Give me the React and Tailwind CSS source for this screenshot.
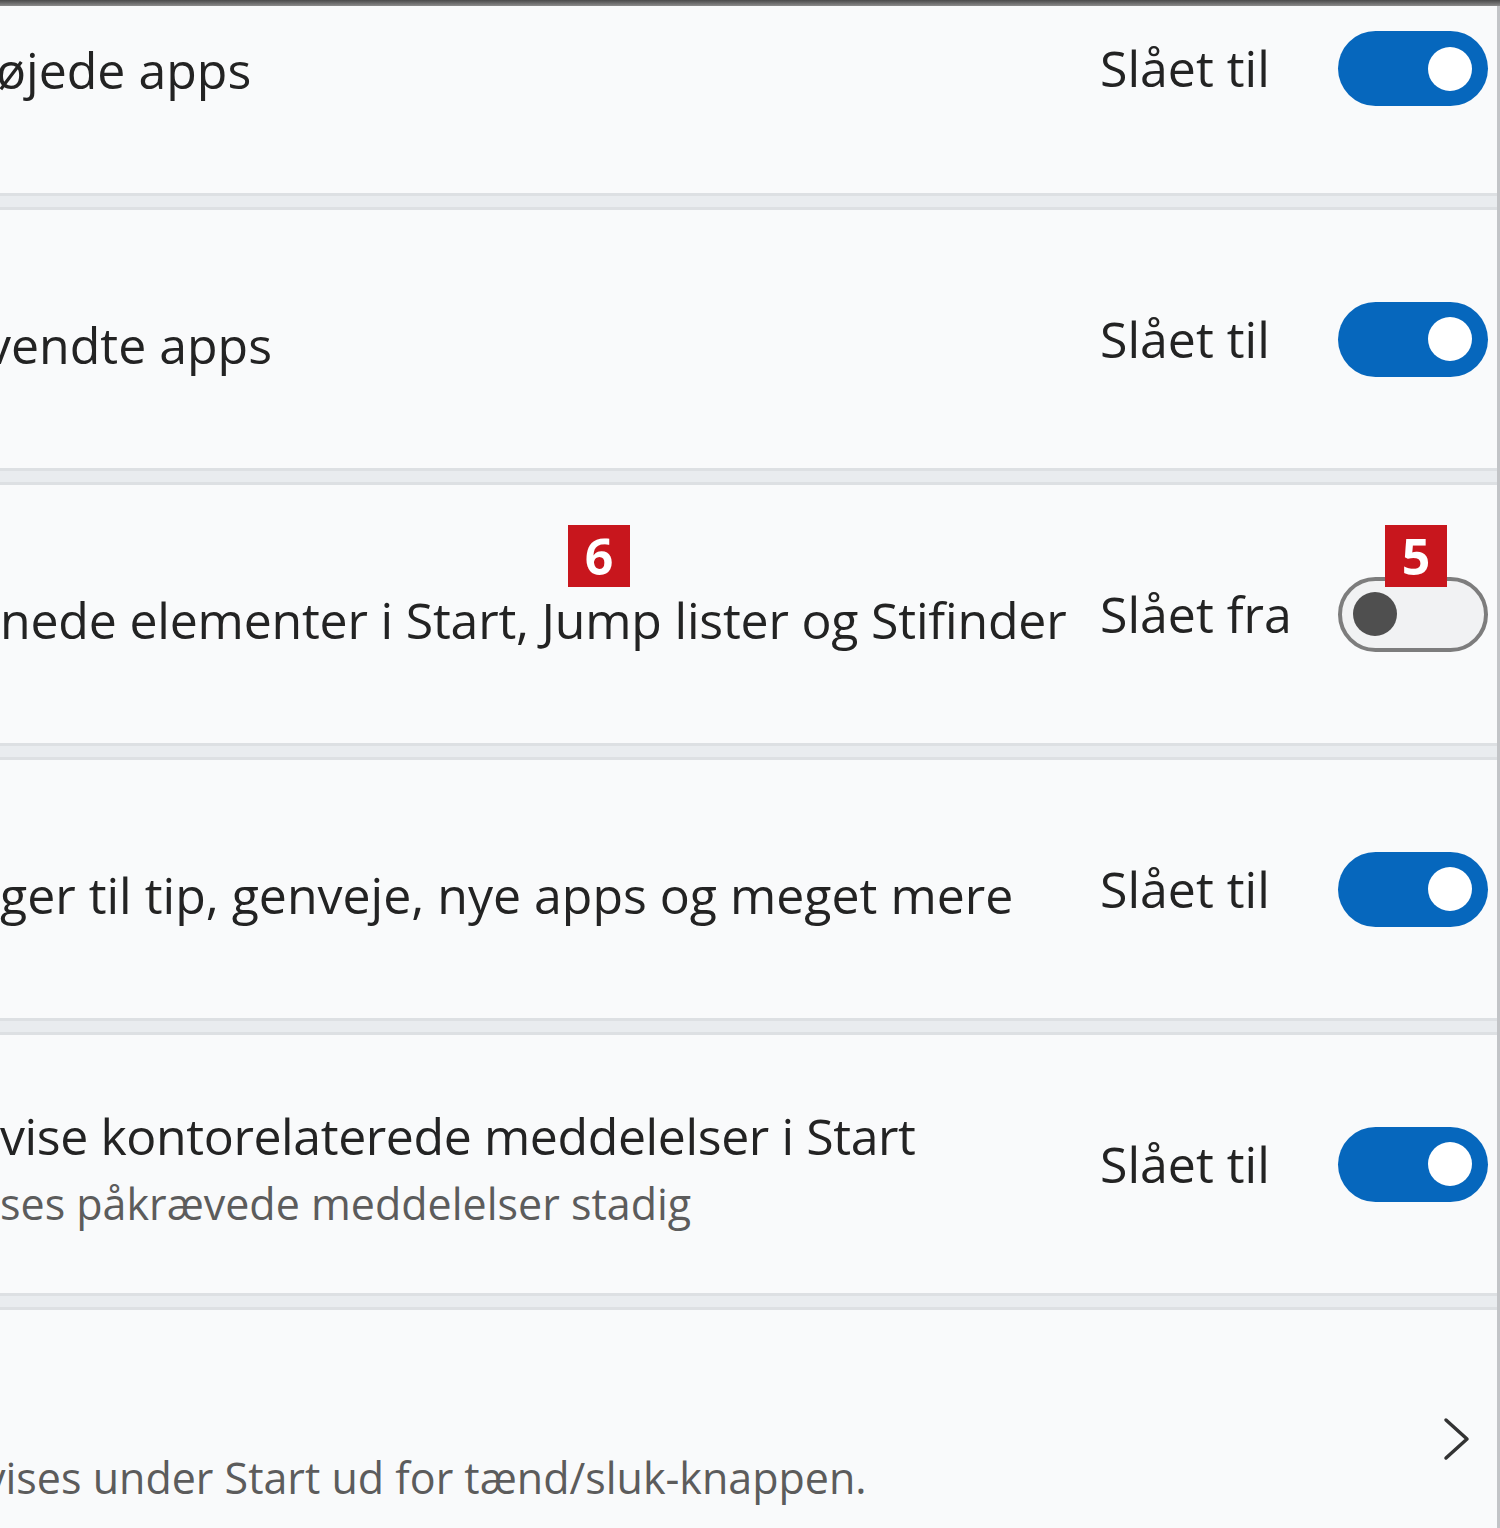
import React from 'react';

const rows = [
  { title: 'øjede apps', titleClass: '-ml-[4px]', on: true, first: true },
  { title: 'vendte apps', titleClass: '-ml-[14px]', on: true },
  { title: 'nede elementer i Start, Jump lister og Stifinder', titleClass: 'ml-0 tracking-[-0.2px]', on: false, badges: true },
  { title: 'ger til tip, genveje, nye apps og meget mere', titleClass: 'ml-0', on: true },
  {
    title: 'vise kontorelaterede meddelelser i Start',
    titleClass: 'ml-0 tracking-[-0.4px]',
    sub: 'ses påkrævede meddelelser stadig',
    subClass: 'ml-0',
    on: true,
  },
];

function Toggle({ on }) {
  if (on) {
    return (
      <div className="w-[150px] h-[75px] shrink-0 rounded-full bg-[#0667bd] flex items-center justify-end pr-[16px]">
        <div className="w-[44px] h-[44px] rounded-full bg-white" />
      </div>
    );
  }
  return (
    <div className="w-[150px] h-[75px] shrink-0 rounded-full border-[4px] border-[#7d7d7d] bg-[#f1f2f3] flex items-center pl-[11px]">
      <div className="w-[44px] h-[44px] rounded-full bg-[#4f4f4f]" />
    </div>
  );
}

function Badge({ n, className }) {
  return (
    <div
      className={`absolute w-[62px] h-[62px] bg-[#c8161d] text-white flex items-center justify-center text-[50px] font-bold leading-none ${className}`}
    >
      {n}
    </div>
  );
}

function Separator() {
  return <div className="h-[17px] border-y-[3px] border-[#dde0e3] bg-[#e9ecef]" />;
}

function Row({ row }) {
  return (
    <div
      className={`relative flex items-center pr-[9px] ${
        row.first ? 'h-[187px] items-start pt-[25px]' : 'h-[258px]'
      }`}
    >
      <div className={`flex-1 min-w-0 overflow-hidden ${row.first ? 'pt-[6px]' : 'pt-[12px]'}`}>
        <div className={`whitespace-nowrap text-[50px] leading-[67px] text-[#232323] ${row.titleClass}`}>
          {row.title}
        </div>
        {row.sub && (
          <div className={`whitespace-nowrap text-[43px] leading-[67px] text-[#5c5c5c] ${row.subClass}`}>
            {row.sub}
          </div>
        )}
      </div>
      <div className="w-[238px] shrink-0 text-[50px] leading-[75px] text-[#232323]">
        {row.on ? 'Slået til' : 'Slået fra'}
      </div>
      <Toggle on={row.on} />
      {row.badges && (
        <>
          <Badge n="6" className="left-[568px] top-[40px]" />
          <Badge n="5" className="left-[1385px] top-[40px]" />
        </>
      )}
    </div>
  );
}

export default function App() {
  return (
    <div className="w-[1500px] h-[1528px] overflow-hidden bg-[#f9fafb] font-['Open_Sans',sans-serif]">
      <div className="h-[6px] bg-gradient-to-b from-[#4a4a4a] to-[#8c8c8c]" />
      <div className="border-r-[3px] border-[#c2c4c7]">
        {rows.map((row, i) => (
          <div key={i}>
            <Row row={row} />
            <Separator />
          </div>
        ))}
        <div className="flex items-center h-[258px] pr-[9px]">
          <div className="flex-1 min-w-0 overflow-hidden pt-[10px]">
            <div className="text-[50px] leading-[67px]">&nbsp;</div>
            <div className="whitespace-nowrap text-[43px] leading-[67px] text-[#5c5c5c] -ml-[16px]">
              vises under Start ud for tænd/sluk-knappen.
            </div>
          </div>
          <div className="w-[150px] shrink-0 flex justify-end pr-[16px]">
            <svg width="30" height="44" viewBox="0 0 30 44" fill="none">
              <path d="M4 3 L25 22 L4 41" stroke="#333" strokeWidth="3.5" strokeLinecap="round" strokeLinejoin="round" />
            </svg>
          </div>
        </div>
      </div>
    </div>
  );
}
